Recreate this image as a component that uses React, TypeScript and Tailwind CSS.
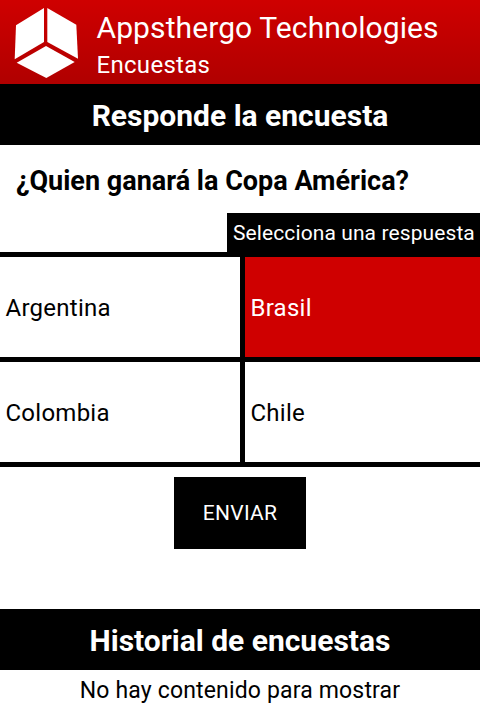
export default function App() {
  const font = { fontFamily: 'Roboto, sans-serif' };
  const cell = "flex h-[100px] items-center pl-[5.5px] pt-[2px] text-[24px] tracking-[0.25px] text-black";
  return (
    <div style={font} className="flex h-[704px] w-[480px] flex-col overflow-hidden bg-white">
      <header className="flex h-[84px] items-start bg-gradient-to-b from-[#cf0000] to-[#b00000] text-white">
        <svg viewBox="0 0 65 72" className="ml-[14px] mt-[8px] h-[72px] w-[65px]" fill="#fff">
          <polygon points="30,0 30,34 0.7,51.3 2,17.3" />
          <polygon points="33.3,0 62.3,16.7 64,50.7 33.3,34" />
          <polygon points="32,38 60.7,54 32.3,70 2.7,54.7" />
        </svg>
        <div className="ml-[17.5px] flex flex-col">
          <span className="mt-[11px] text-[30px] leading-[34px] tracking-[0.1px]">Appsthergo Technologies</span>
          <span className="mt-[5px] text-[24px] leading-[30px] tracking-[0.3px]">Encuestas</span>
        </div>
      </header>
      <div className="flex h-[61px] items-center justify-center bg-black pt-[1px] text-[30px] font-bold text-white">Responde la encuesta</div>
      <div className="flex h-[68px] items-center pl-[16px] pt-[4px] text-[27px] font-bold text-black">¿Quien ganará la Copa América?</div>
      <div className="flex justify-end">
        <div className="flex h-[39px] w-[253px] items-center bg-black pl-[6px] pt-[2px] text-[21px] tracking-[0.1px] text-white">Selecciona una respuesta</div>
      </div>
      <div className="grid grid-cols-[240px_235px] gap-[5px] bg-black py-[5px]">
        <div className={`${cell} bg-white`}>Argentina</div>
        <div className={`${cell} bg-[#cf0000] !text-white`}>Brasil</div>
        <div className={`${cell} bg-white`}>Colombia</div>
        <div className={`${cell} bg-white`}>Chile</div>
      </div>
      <div className="mt-[10px] flex justify-center">
        <button className="h-[72px] w-[132px] bg-black pt-[2px] text-[21px] tracking-[0.3px] text-white">ENVIAR</button>
      </div>
      <div className="mt-[60px] flex h-[61px] items-center justify-center bg-black pt-[1px] text-[30px] font-bold text-white">Historial de encuestas</div>
      <div className="mt-[8px] text-center text-[23px] leading-[26px] tracking-[0.16px] text-black">No hay contenido para mostrar</div>
    </div>
  );
}
